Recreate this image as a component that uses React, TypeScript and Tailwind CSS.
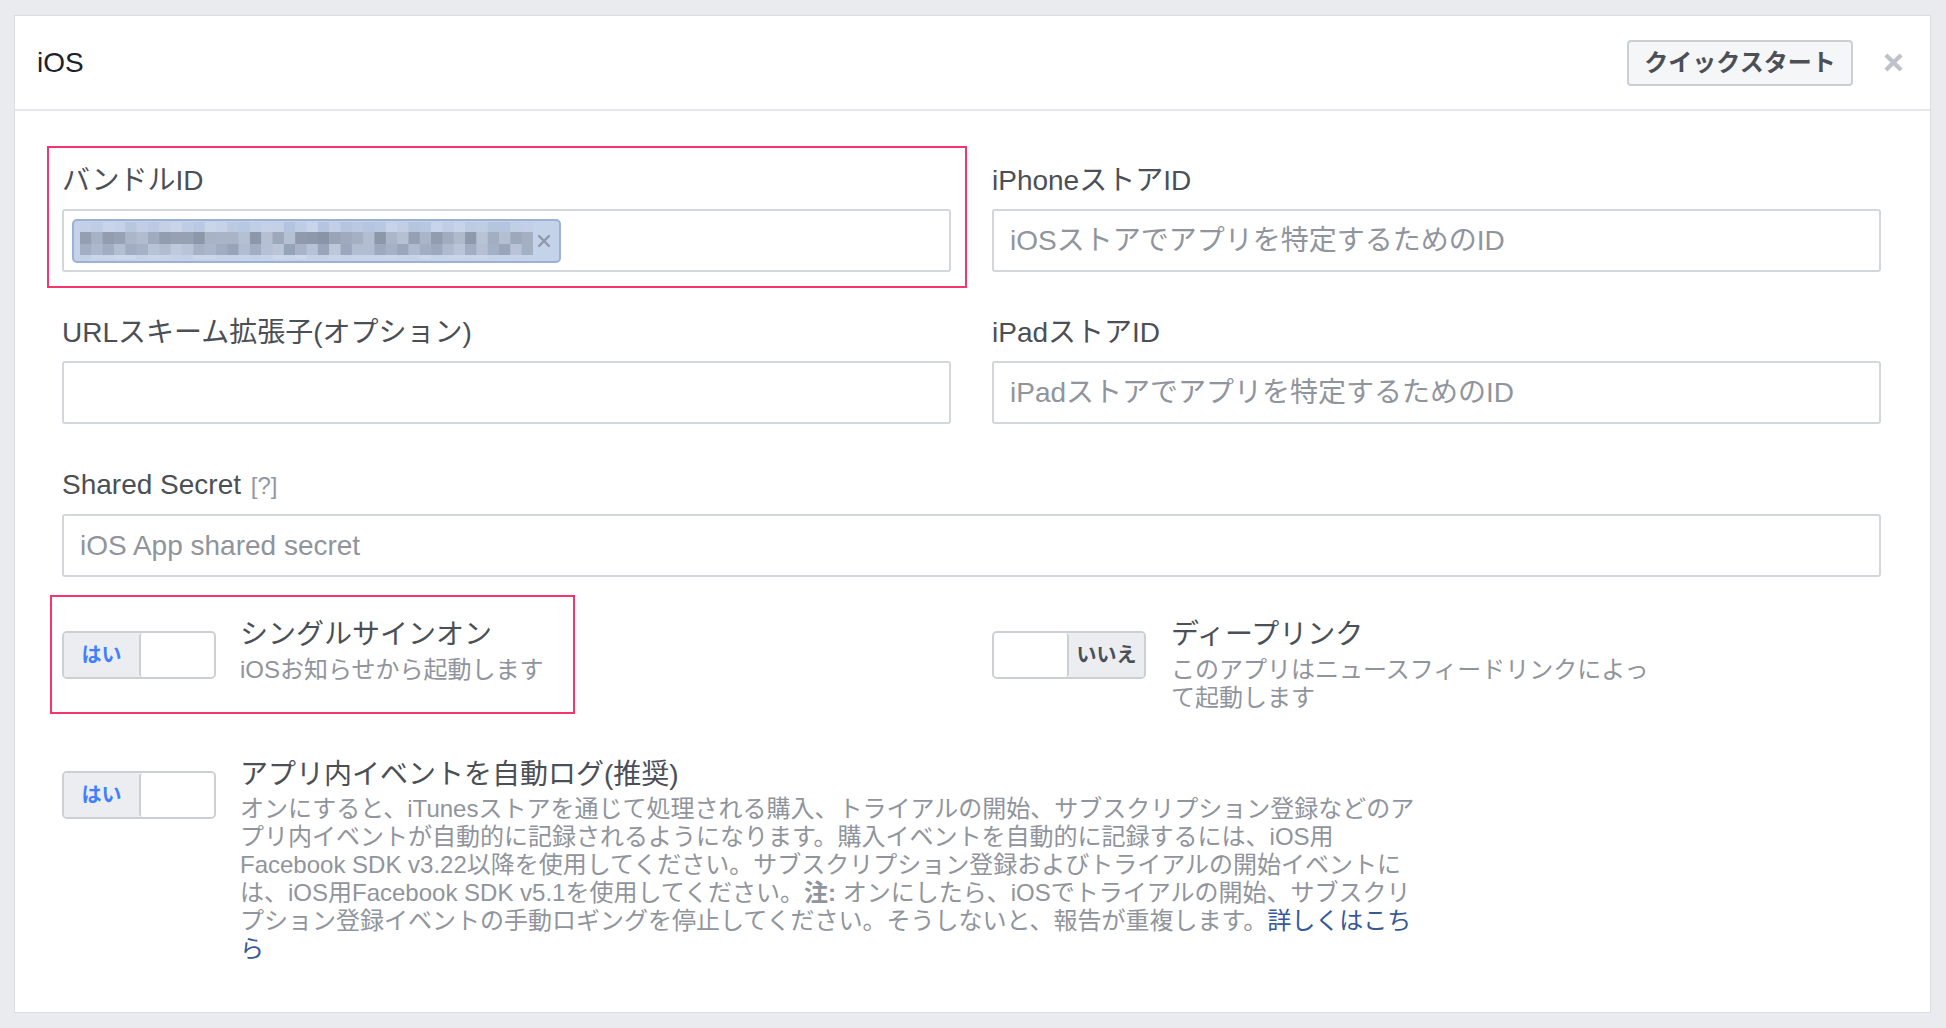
import React from "react";

function seeded(seed: number) {
  let s = seed >>> 0;
  return () => {
    s = (s + 0x6d2b79f5) >>> 0;
    let t = s;
    t = Math.imul(t ^ (t >>> 15), t | 1);
    t ^= t + Math.imul(t ^ (t >>> 7), t | 61);
    return ((t ^ (t >>> 14)) >>> 0) / 4294967296;
  };
}

type RowSpec = { h: number; lo: number[]; hi: number[] };

const Mosaic = () => {
  const rand = seeded(42);
  const rows: RowSpec[] = [
    { h: 10, lo: [180, 196, 222], hi: [204, 215, 235] },
    { h: 12, lo: [136, 147, 166], hi: [184, 195, 214] },
    { h: 11, lo: [146, 160, 182], hi: [190, 201, 220] },
    { h: 4, lo: [196, 208, 230], hi: [206, 216, 236] },
  ];
  const cols = 40;
  const cw = 453 / cols;
  const rects: React.ReactNode[] = [];
  let y = 0;
  rows.forEach((r, ri) => {
    for (let c = 0; c < cols; c++) {
      const t = rand();
      const col = r.lo.map((v, i) => Math.round(v + (r.hi[i] - v) * t));
      rects.push(
        <rect
          key={`${ri}-${c}`}
          x={c * cw}
          y={y}
          width={cw + 0.5}
          height={r.h}
          fill={`rgb(${col[0]},${col[1]},${col[2]})`}
        />
      );
    }
    y += r.h;
  });
  return (
    <svg width={453} height={37} viewBox="0 0 453 37" className="block">
      {rects}
    </svg>
  );
};

const XIcon = ({ size, color, stroke }: { size: number; color: string; stroke: number }) => (
  <svg width={size} height={size} viewBox="0 0 20 20" className="block">
    <path d="M2 2 L18 18 M18 2 L2 18" stroke={color} strokeWidth={stroke} strokeLinecap="butt" />
  </svg>
);

const Field = ({
  label,
  placeholder,
  extra,
  children,
}: {
  label: React.ReactNode;
  placeholder?: string;
  extra?: React.ReactNode;
  children?: React.ReactNode;
}) => (
  <div className="relative">
    {extra}
    <div className="mb-[11px] text-[28px] leading-[34px] text-[#4b4f56]">{label}</div>
    <div className="flex h-[63px] items-center rounded-[3px] border-2 border-[#d3d6db] bg-white">
      {children ?? (
        <input
          className="h-full w-full bg-transparent px-[16px] text-[28px] text-[#1d2129] outline-none placeholder:text-[#90949c]"
          placeholder={placeholder}
        />
      )}
    </div>
  </div>
);

const Toggle = ({ on }: { on: boolean }) => (
  <div className="mt-[13px] flex h-[48px] w-[154px] shrink-0 overflow-hidden rounded-[5px] border-2 border-[#ccd0d5] bg-white">
    {on ? (
      <>
        <div className="flex w-[75px] items-center justify-center bg-[#ebedf0] text-[20px] font-bold text-[#4080ff]">
          はい
        </div>
        <div className="flex-1 rounded-[3px] border-l-2 border-[#ccd0d5] bg-white" />
      </>
    ) : (
      <>
        <div className="flex-1 rounded-[3px] border-r-2 border-[#ccd0d5] bg-white" />
        <div className="flex w-[75px] items-center justify-center bg-[#ebedf0] text-[20px] font-bold text-[#4b4f56]">
          いいえ
        </div>
      </>
    )}
  </div>
);

export default function App() {
  return (
    <div className="h-[1028px] w-full overflow-hidden bg-[#e9ebee] pt-[15px] pl-[14px] font-['Liberation_Sans','Noto_Sans_CJK_JP',sans-serif]">
      <div className="w-[1917px] border border-[#dadde1] bg-white">
        {/* Header */}
        <div className="flex h-[95px] items-center justify-between border-b-2 border-[#e5e6e9] pl-[22px] pr-[27px]">
          <div className="text-[28px] leading-none text-[#1d2129]">iOS</div>
          <div className="flex items-center gap-[31px]">
            <button className="flex h-[46px] w-[226px] items-center justify-center rounded-[4px] border-2 border-[#ccd0d5] bg-[#f5f6f7] text-[24px] font-bold text-[#4b4f56]">
              クイックスタート
            </button>
            <XIcon size={19} color="#bec2c9" stroke={4.5} />
          </div>
        </div>

        {/* Body */}
        <div className="pt-[53px] pl-[47px] pr-[49px] pb-[49px]">
          <div className="grid grid-cols-2 gap-x-[41px] gap-y-[44px]">
            <Field
              label="バンドルID"
              extra={
                <div className="pointer-events-none absolute -top-[18px] -left-[15px] -right-[16px] -bottom-[16px] border-2 border-[#f8346f]" />
              }
            >
              <div className="ml-[8px] flex h-[44px] w-[489px] items-center rounded-[5px] border-2 border-[#9cb1d6] bg-[#c5d3ea] pl-[6px]">
                <Mosaic />
                <div className="ml-[4px]">
                  <XIcon size={14} color="#8e99ab" stroke={3.2} />
                </div>
              </div>
            </Field>
            <Field label="iPhoneストアID" placeholder="iOSストアでアプリを特定するためのID" />
            <Field label="URLスキーム拡張子(オプション)" />
            <Field label="iPadストアID" placeholder="iPadストアでアプリを特定するためのID" />
            <div className="col-span-2">
              <Field
                label={
                  <>
                    Shared Secret{" "}
                    <span className="ml-[2px] text-[24px] text-[#9197a3]">[?]</span>
                  </>
                }
                placeholder="iOS App shared secret"
              />
            </div>
          </div>

          {/* Toggle row 1 */}
          <div className="mt-[41px] grid grid-cols-2 gap-x-[41px]">
            <div className="relative flex items-start gap-[24px]">
              <div className="pointer-events-none absolute -top-[23px] -left-[12px] h-[119px] w-[525px] border-2 border-[#f8346f]" />
              <Toggle on />
              <div>
                <div className="text-[28px] leading-[34px] text-[#4b4f56]">シングルサインオン</div>
                <div className="mt-[4px] text-[24px] leading-[28px] text-[#90949c]">iOSお知らせから起動します</div>
              </div>
            </div>
            <div className="flex items-start gap-[25px]">
              <Toggle on={false} />
              <div>
                <div className="text-[28px] leading-[34px] text-[#4b4f56]">ディープリンク</div>
                <div className="mt-[4px] text-[24px] leading-[28px] text-[#90949c]">
                  このアプリはニュースフィードリンクによっ
                  <br />
                  て起動します
                </div>
              </div>
            </div>
          </div>

          {/* Toggle row 2 */}
          <div className="mt-[46px] flex items-start gap-[24px]">
            <Toggle on />
            <div>
              <div className="text-[28px] leading-[34px] text-[#4b4f56]">アプリ内イベントを自動ログ(推奨)</div>
              <div className="mt-[3px] whitespace-nowrap text-[24px] leading-[28px] text-[#90949c]">
                <div>オンにすると、iTunesストアを通じて処理される購入、トライアルの開始、サブスクリプション登録などのア</div>
                <div>プリ内イベントが自動的に記録されるようになります。購入イベントを自動的に記録するには、iOS用</div>
                <div>Facebook SDK v3.22以降を使用してください。サブスクリプション登録およびトライアルの開始イベントに</div>
                <div>
                  は、iOS用Facebook SDK v5.1を使用してください。<span className="font-bold">注:</span> オンにしたら、iOSでトライアルの開始、サブスクリ
                </div>
                <div>
                  プション登録イベントの手動ロギングを停止してください。そうしないと、報告が重複します。
                  <span className="text-[#365899]">詳しくはこち</span>
                </div>
                <div className="text-[#365899]">ら</div>
              </div>
            </div>
          </div>
        </div>
      </div>
    </div>
  );
}
